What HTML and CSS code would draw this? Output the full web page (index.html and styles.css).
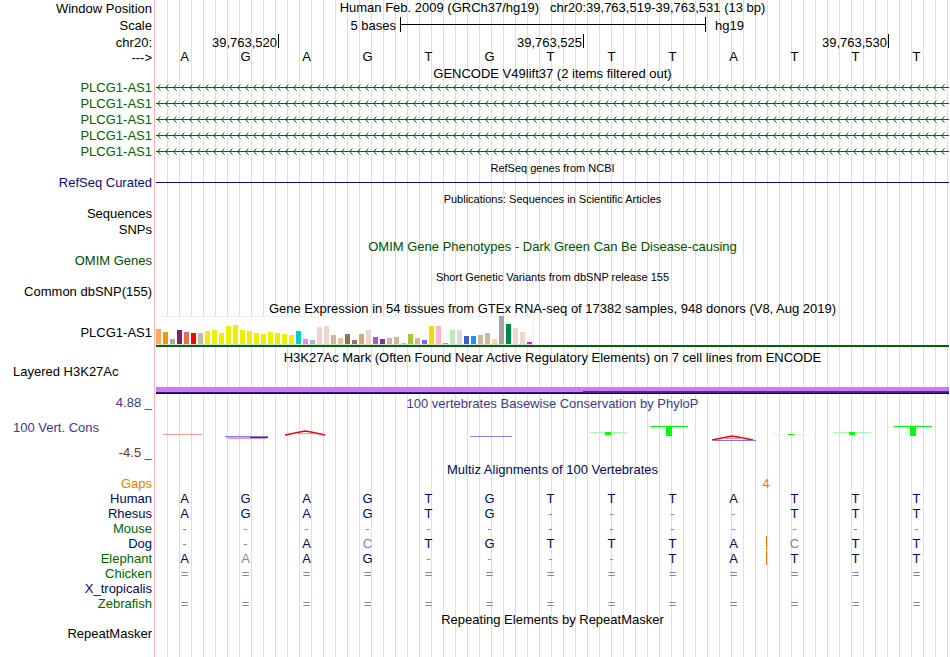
FILE: index.html
```html
<!DOCTYPE html>
<html lang="en">
<head>
  <meta charset="UTF-8" />
  <meta name="viewport" content="width=device-width, initial-scale=1.0"/>
  <title>Human chr20:39,763,519-39,763,531 - Genome Browser</title>
  <link rel="stylesheet" href="styles.css">
</head>
<body>

<main class="browser">

  <!-- Position and ruler -->
  <div class="row tall">
    <div class="label">Window Position</div>
    <div class="title position">Human Feb. 2009 (GRCh37/hg19) &nbsp; chr20:39,763,519-39,763,531 (13 bp)</div>
  </div>
  <div class="row tall">
    <div class="label">Scale</div>
    <div class="columns">
      <span class="scale-text">5 bases</span>
      <span class="scale-bar"></span>
      <span class="scale-db">hg19</span>
    </div>
  </div>
  <div class="row ruler">
    <div class="label">chr20:</div>
    <div class="columns">
      <span class="tick tick-520">39,763,520</span>
      <span class="tick tick-525">39,763,525</span>
      <span class="tick tick-530">39,763,530</span>
    </div>
  </div>
  <div class="row short">
    <div class="label">---&gt;</div>
    <div class="columns bases" id="bases"></div>
  </div>

  <!-- Genes -->
  <div class="row short"><h2 class="title">GENCODE V49lift37 (2 items filtered out)</h2></div>
  <div id="gencode"></div>

  <div class="row short"><h2 class="title small">RefSeq genes from NCBI</h2></div>
  <div class="row">
    <div class="label navy">RefSeq Curated</div>
    <div class="track"><div class="refseq-line"></div></div>
  </div>

  <!-- Literature and variants -->
  <div class="row short"><h2 class="title small">Publications: Sequences in Scientific Articles</h2></div>
  <div class="row"><div class="label">Sequences</div></div>
  <div class="row"><div class="label">SNPs</div></div>

  <div class="row short"><h2 class="title omim">OMIM Gene Phenotypes - Dark Green Can Be Disease-causing</h2></div>
  <div class="row"><div class="label omim">OMIM Genes</div></div>

  <div class="row short"><h2 class="title small">Short Genetic Variants from dbSNP release 155</h2></div>
  <div class="row"><div class="label">Common dbSNP(155)</div></div>

  <!-- Expression -->
  <div class="row short"><h2 class="title">Gene Expression in 54 tissues from GTEx RNA-seq of 17382 samples, 948 donors (V8, Aug 2019)</h2></div>
  <div class="row gtex">
    <div class="label">PLCG1-AS1</div>
    <div class="gtex-track">
      <div class="gtex-chart" id="gtex"></div>
    </div>
  </div>

  <!-- Regulation -->
  <div class="row short"><h2 class="title">H3K27Ac Mark (Often Found Near Active Regulatory Elements) on 7 cell lines from ENCODE</h2></div>
  <div class="row h3k">
    <div class="label left">Layered H3K27Ac</div>
    <div class="columns h3k-signal">
      <span class="h3k-low"></span>
      <span class="h3k-high"></span>
    </div>
  </div>

  <!-- Conservation -->
  <div class="row tall">
    <div class="label phylop">4.88 _</div>
    <h2 class="title phylop">100 vertebrates Basewise Conservation by PhyloP</h2>
  </div>
  <div class="row cons">
    <div class="label left phylop">100 Vert. Cons</div>
    <svg class="cons-logo" viewBox="0 0 793 34" preserveAspectRatio="none" aria-hidden="true">
      <path d="M7 23.5H46" stroke="#ff9696"/>
      <path d="M69 25.5H112" stroke="#8282ff"/>
      <path d="M70 26.5H105" stroke="#b4b4ff"/>
      <path d="M94 26.5H112" stroke="#1e1eff"/>
      <path d="M72 27.5H110" stroke="#ff9696"/>
      <path d="M129 24L144 21L149 20L155 21L169 24" fill="none" stroke="#ff0000" stroke-width="1.6"/>
      <path d="M140 22.5H158" stroke="#ff9696"/>
      <path d="M314 25.5H356" stroke="#8282ff"/>
      <path d="M433 21.5H471M677 21.5H715" stroke="#aaffaa"/>
      <path d="M449 21H455V24H449ZM693 21H699V24H693Z" fill="#00ff00"/>
      <path d="M494 15H532V16H516V25H510V16H494ZM738 15H776V16H760V25H754V16H738Z" fill="#00ff00"/>
      <path d="M556 29L571 26L576 25L582 26L597 29" fill="none" stroke="#ff0000" stroke-width="1.6"/>
      <path d="M567 27.5H587" stroke="#ff9696"/>
      <path d="M558 29.5H600" stroke="#7878ff"/>
      <path d="M616 23.5H654" stroke="#dcffdc"/>
      <path d="M632 23.5H638" stroke="#00ff00"/>
    </svg>
  </div>
  <div class="row"><div class="label phylop-min">-4.5 _</div></div>

  <div class="row short"><h2 class="title species">Multiz Alignments of 100 Vertebrates</h2></div>
  <table class="multiz">
    <tbody id="multiz">
      <tr class="gaps">
        <th scope="row">Gaps</th>
        <td colspan="9"></td>
        <td colspan="2" class="gap-size">4</td>
        <td colspan="2"></td>
      </tr>
    </tbody>
  </table>

  <div class="row short"><h2 class="title">Repeating Elements by RepeatMasker</h2></div>
  <div class="row short"><div class="label">RepeatMasker</div></div>
</main>

<script src="script.js"></script>
</body>
</html>
```

FILE: styles.css
```css
body {
  margin: 0;
  font-family: "Liberation Sans", Arial, Helvetica, sans-serif;
  font-size: 13px;
  color: #000;
  background: #fff;
}

/* Label column, red divider and blue guide lines */
.browser {
  min-height: 100vh;
  box-sizing: border-box;
  padding-right: 1px;
  overflow: hidden;
  background:
    linear-gradient(#ffb4b4, #ffb4b4) 154px 0 / 1px 100% no-repeat,
    linear-gradient(#fff, #fff) 0 0 / 156px 100% no-repeat,
    repeating-linear-gradient(to right, transparent 0 11px, #dcdcf8 11px 12px);
}

.row {
  display: grid;
  grid-template-columns: 156px 1fr;
  height: 16px;
  line-height: 16px;
}

.row.tall {
  height: 17px;
  line-height: 17px;
}

.row.short {
  height: 15px;
  line-height: 15px;
}

.row.ruler {
  line-height: 18px;
}

.label {
  padding-right: 4px;
  text-align: right;
  white-space: nowrap;
}

.label.left {
  padding-left: 13px;
  text-align: left;
}

.title {
  grid-column: 2;
  margin: 0;
  padding-top: 1px;
  font-size: 13px;
  font-weight: normal;
  text-align: center;
  white-space: nowrap;
}

.title.small {
  font-size: 11px;
}

.title.position {
  padding-top: 0;
  line-height: 16px;
}

.green {
  color: #006400;
}

.navy {
  color: #0c0c78;
}

.omim {
  color: #005000;
}

.phylop {
  color: #3c3c8c;
}

.phylop-min {
  color: #783232;
}

.species {
  color: #000a5a;
}

/* One column for each base */
.columns {
  display: grid;
  grid-template-columns: repeat(13, 1fr);
}

.scale-text {
  grid-column: 1 / 5;
  padding-right: 4px;
  text-align: right;
}

.scale-bar {
  grid-column: 5 / 10;
  height: 15px;
  margin-right: -1px;
  border-left: 1px solid #000;
  border-right: 1px solid #000;
  background: linear-gradient(#000, #000) 0 7px / 100% 1px no-repeat;
}

.scale-db {
  grid-column: 10 / 12;
  padding-left: 10px;
}

.tick {
  height: 14px;
  margin-right: -1px;
  padding-right: 1px;
  border-right: 1px solid #000;
  text-align: right;
}

.tick-520 {
  grid-column: 1 / 3;
}

.tick-525 {
  grid-column: 3 / 8;
}

.tick-530 {
  grid-column: 8 / 13;
}

.bases {
  line-height: 13px;
}

.bases span {
  padding-right: 4px;
  text-align: center;
}

/* Gene tracks */
.intron {
  display: block;
  width: 100%;
  height: 16px;
}

.refseq-line {
  height: 7px;
  border-bottom: 1px solid #0c0c78;
}

/* GTEx bars */
.row.gtex {
  height: 34px;
  line-height: 35px;
}

.gtex-track {
  height: 32px;
  box-sizing: border-box;
  padding-top: 1px;
  border-bottom: 2px solid #006400;
}

.gtex-chart {
  display: flex;
  align-items: flex-end;
  gap: 2px;
  width: 378px;
  height: 29px;
  box-sizing: border-box;
  border-bottom: 1px solid #dcdcdc;
  background: #fff;
  box-shadow: inset 0 1px #f0f0f0, inset -1px 0 #f0f0f0;
}

.gtex-chart span {
  width: 5px;
}

/* H3K27Ac */
.row.h3k {
  height: 30px;
  line-height: 15px;
}

.h3k-signal {
  align-items: end;
}

.h3k-low,
.h3k-high {
  height: 7px;
}

.h3k-low {
  grid-column: 1 / 8;
  background: linear-gradient(#cc78ff 0 5px, #281e78 5px 6px, #140a32 6px);
}

.h3k-high {
  grid-column: 8 / 14;
  background: linear-gradient(#cc78ff 0 4px, #4b28be 4px 5px, #32288c 5px 6px, #140a32 6px);
}

/* Conservation */
.row.cons {
  height: 34px;
  line-height: 34px;
}

.cons-logo {
  display: block;
  width: 100%;
  height: 34px;
}

.multiz {
  width: 100%;
  table-layout: fixed;
  border-collapse: collapse;
  line-height: 15px;
  color: #000a5a;
}

.multiz th {
  width: 152px;
  padding: 0 4px 0 0;
  font-weight: normal;
  text-align: right;
}

.multiz td {
  height: 15px;
  padding: 0 4px 0 0;
  text-align: center;
}

.multiz .gaps {
  color: #e68200;
}

.multiz .gap-size {
  padding: 0;
}

.multiz .faint {
  color: #8282b4;
}

.multiz .insert {
  background: linear-gradient(#e68200, #e68200) 0 0 / 1px 14px no-repeat;
}
```

FILE: script.js
```js
const sequence = 'AGAGTGTTTATTT';

// lower case letters are mismatches
const species = [
  { name: 'Human', bases: 'AGAGTGTTTATTT' },
  { name: 'Rhesus', bases: 'AGAGTG----TTT' },
  { name: 'Mouse', bases: '-------------', green: true },
  { name: 'Dog', bases: '--AcTGTTTAcTT', insert: 10 },
  { name: 'Elephant', bases: 'AaAG----TATTT', green: true, insert: 10 },
  { name: 'Chicken', bases: '=============', green: true },
  { name: 'X_tropicalis', bases: '             ' },
  { name: 'Zebrafish', bases: '=============', green: true }
];

const tissues = [
  [15, '#ffaa56'], [12, '#f19a00'], [5, '#8fbc8f'], [14, '#8b1c62'], [12, '#ee6a50'], [11, '#ff0000'],
  [11, '#cdb79e'], [13, '#eeee00'], [14, '#eeee00'], [11, '#eeee00'], [18, '#eeee00'], [19, '#eeee00'],
  [14, '#eeee00'], [13, '#eeee00'], [11, '#eeee00'], [10, '#eeee00'], [12, '#eeee00'], [11, '#eeee00'],
  [10, '#eeee00'], [9, '#eeee00'], [13, '#00cdcd'], [5, '#ee82ee'], [4, '#9ac0cd'], [17, '#eed5d2'],
  [18, '#eed5d2'], [9, '#cdb79e'], [6, '#eec591'], [10, '#8b7355'], [4, '#8b7355'], [10, '#cdaa7d'],
  [14, '#eed5d2'], [7, '#b452cd'], [5, '#7a378b'], [6, '#cdb79e'], [7, '#cdb79e'], [1, '#cdb79e'],
  [10, '#9acd32'], [6, '#cdb79e'], [4, '#7a67ee'], [18, '#ffd700'], [18, '#ffb6c1'], [1, '#cd9b1d'],
  [14, '#b4eeb4'], [14, '#d9d9d9'], [8, '#3a5fcd'], [8, '#1e90ff'], [9, '#cdb79e'], [11, '#cdb79e'],
  [5, '#ffd39b'], [28, '#a6a6a6'], [20, '#008b45'], [16, '#eed5d2'], [12, '#eed5d2'], [2, '#ff00ff']
];

document.getElementById('bases').innerHTML =
  sequence.split('').map(b => `<span>${b}</span>`).join('');

// five transcripts on the minus strand
let genes = '';
for (let i = 0; i < 5; i++) {
  genes += `
    <div class="row">
      <div class="label green">PLCG1-AS1</div>
      <svg class="intron" aria-hidden="true">
        <defs>
          <pattern id="strand-${i}" width="8" height="16" patternUnits="userSpaceOnUse">
            <path d="M4.5 4.5L1.5 7.5L4.5 10.5" fill="none" stroke="#006400"/>
          </pattern>
        </defs>
        <rect width="100%" height="16" fill="url(#strand-${i})"/>
        <rect y="7" width="100%" height="1" fill="#006400"/>
      </svg>
    </div>`;
}
document.getElementById('gencode').innerHTML = genes;

document.getElementById('gtex').innerHTML =
  tissues.map(([h, color]) => `<span style="height: ${h}px; background: ${color}"></span>`).join('');

const multiz = document.getElementById('multiz');
species.forEach(s => {
  const tr = document.createElement('tr');
  const cells = s.bases.split('').map((b, i) => {
    const classes = [];
    if (!/[A-Z]/.test(b)) classes.push('faint');
    if (s.insert === i) classes.push('insert');
    return `<td class="${classes.join(' ')}">${b.toUpperCase()}</td>`;
  }).join('');
  tr.innerHTML = `<th scope="row" class="${s.green ? 'green' : ''}">${s.name}</th>${cells}`;
  multiz.appendChild(tr);
});
```
